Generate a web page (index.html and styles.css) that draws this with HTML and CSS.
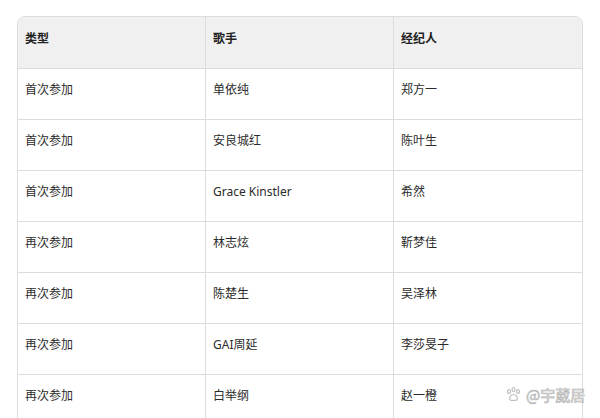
FILE: index.html
```html
<!DOCTYPE html>
<html lang="zh">
<head>
<meta charset="utf-8">
<link rel="stylesheet" href="styles.css">
</head>
<body>
<div class="wrap">
  <table class="tbl">
    <thead>
      <tr><th>类型</th><th>歌手</th><th>经纪人</th></tr>
    </thead>
    <tbody>
      <tr><td>首次参加</td><td>单依纯</td><td>郑方一</td></tr>
      <tr><td>首次参加</td><td>安良城红</td><td>陈叶生</td></tr>
      <tr><td>首次参加</td><td>Grace Kinstler</td><td>希然</td></tr>
      <tr><td>再次参加</td><td>林志炫</td><td>靳梦佳</td></tr>
      <tr><td>再次参加</td><td>陈楚生</td><td>吴泽林</td></tr>
      <tr><td>再次参加</td><td>GAI周延</td><td>李莎旻子</td></tr>
      <tr><td>再次参加</td><td>白举纲</td><td>赵一橙</td></tr>
    </tbody>
  </table>
  <div class="mark">
    <svg class="paw" width="15" height="15" viewBox="0 0 14 14">
      <g fill="none" stroke="#bdbdbd" stroke-width="1.1">
        <ellipse cx="2.8" cy="4.2" rx="1.4" ry="1.8"/>
        <ellipse cx="7" cy="2.4" rx="1.4" ry="1.8"/>
        <ellipse cx="11.2" cy="4.2" rx="1.4" ry="1.8"/>
        <path d="M3.5 11.5 C3 9 5 7 7 7 C9 7 11 9 10.5 11.5 C10 13 8 12.5 7 12.5 C6 12.5 4 13 3.5 11.5 Z"/>
      </g>
    </svg>
    <span class="mark-text">@宇葳居</span>
  </div>
</div>
</body>
</html>
```

FILE: styles.css
```css
html, body {
  margin: 0;
  padding: 0;
  background: #ffffff;
}
body {
  font-family: "Noto Sans", "Noto Sans CJK SC", sans-serif;
  color: #2b2b2b;
  font-size: 12px;
}
.wrap {
  position: relative;
  padding: 16px 17px 0 17px;
  height: 402px;
  overflow: hidden;
}
.tbl {
  width: 566px;
  border-collapse: separate;
  border-spacing: 0;
  border: 1px solid #dcdcdc;
  border-radius: 8px 8px 0 0;
  table-layout: fixed;
}
.tbl th, .tbl td {
  text-align: left;
  vertical-align: top;
  line-height: 17px;
  padding: 12px 7px 21px 7px;
  border-bottom: 1px solid #dcdcdc;
  border-right: 1px solid #dcdcdc;
}
.tbl th:last-child, .tbl td:last-child {
  border-right: none;
}
.tbl th {
  background: #f0f0f0;
  font-weight: 600;
  color: #222;
  padding-top: 13px;
  padding-bottom: 21px;
}
.tbl thead th:first-child { border-top-left-radius: 8px; }
.tbl thead th:last-child { border-top-right-radius: 8px; }
.mark {
  position: absolute;
  left: 506px;
  top: 386px;
  display: flex;
  align-items: center;
  gap: 5px;
}
.mark-text {
  font-size: 15px;
  color: #ececec;
  -webkit-text-stroke: 0.6px #b0b0b0;
  font-family: "Noto Sans CJK SC", sans-serif;
  line-height: 17px;
}
```
